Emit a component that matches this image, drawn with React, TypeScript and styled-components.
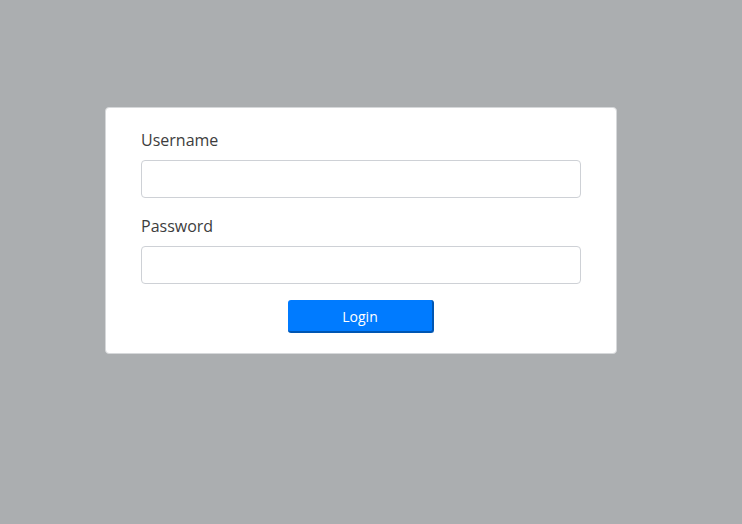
import React, { useState } from 'react';
import styled, { createGlobalStyle } from 'styled-components';

const GlobalStyle = createGlobalStyle`
  html, body {
    margin: 0;
    padding: 0;
    background: #abaeb0;
    font-family: 'Open Sans', 'Noto Sans', sans-serif;
  }
`;

const Page = styled.div`
  min-height: 524px;
  padding: 107px 0 0 105px;
  box-sizing: border-box;
`;

const Card = styled.form`
  width: 512px;
  box-sizing: border-box;
  padding: 20px 35px;
  background: #ffffff;
  border: 1px solid #d6d8da;
  border-radius: 4px;
  display: flex;
  flex-direction: column;
`;

const Field = styled.div`
  display: flex;
  flex-direction: column;
  gap: 8px;
  margin-bottom: 16px;
`;

const Label = styled.label`
  font-size: 16px;
  line-height: 24px;
  color: #3d3d3d;
`;

const Input = styled.input`
  height: 38px;
  box-sizing: border-box;
  width: 100%;
  border: 1px solid #ced1d6;
  border-radius: 4px;
  padding: 6px 12px;
  font-family: inherit;
  font-size: 15px;
  outline: none;

  &:focus {
    border-color: #80bdff;
  }
`;

const Button = styled.button`
  align-self: center;
  width: 146px;
  height: 33px;
  box-sizing: border-box;
  background: #007bff;
  color: #ffffff;
  border: none;
  border-right: 2px solid #0056b3;
  border-bottom: 2px solid #0056b3;
  border-radius: 3px;
  font-family: inherit;
  font-size: 14px;
  padding: 2px 0 0;
  cursor: pointer;
`;

const App = () => {
  const [username, setUsername] = useState('');
  const [password, setPassword] = useState('');

  return (
    <>
      <GlobalStyle />
      <Page>
        <Card onSubmit={(e) => e.preventDefault()}>
          <Field>
            <Label htmlFor="username">Username</Label>
            <Input
              id="username"
              value={username}
              onChange={(e) => setUsername(e.target.value)}
            />
          </Field>
          <Field>
            <Label htmlFor="password">Password</Label>
            <Input
              id="password"
              type="password"
              value={password}
              onChange={(e) => setPassword(e.target.value)}
            />
          </Field>
          <Button type="submit">Login</Button>
        </Card>
      </Page>
    </>
  );
};

export default App;
